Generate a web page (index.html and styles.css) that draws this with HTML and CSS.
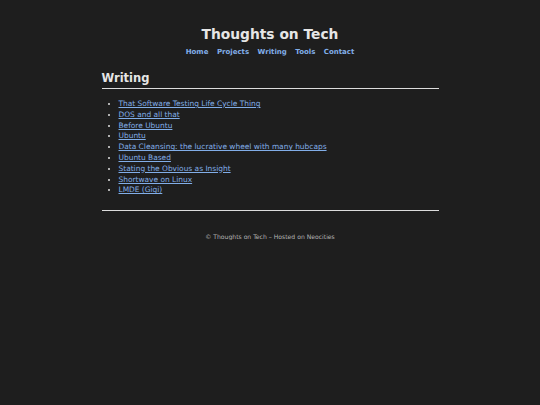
FILE: index.html
```
<!DOCTYPE html>
<html>
<head>
<meta charset="utf-8">
<link rel="stylesheet" href="styles.css">
</head>
<body>
<header class="site-header">
  <h1 class="site-title">Thoughts on Tech</h1>
  <nav class="site-nav">
    <a href="#">Home</a>
    <a href="#">Projects</a>
    <a href="#">Writing</a>
    <a href="#">Tools</a>
    <a href="#">Contact</a>
  </nav>
</header>
<main class="content">
  <h2 class="section-title">Writing</h2>
  <ul class="post-list">
    <li><a href="#">That Software Testing Life Cycle Thing</a></li>
    <li><a href="#">DOS and all that</a></li>
    <li><a href="#">Before Ubuntu</a></li>
    <li><a href="#">Ubuntu</a></li>
    <li><a href="#">Data Cleansing: the lucrative wheel with many hubcaps</a></li>
    <li><a href="#">Ubuntu Based</a></li>
    <li><a href="#">Stating the Obvious as Insight</a></li>
    <li><a href="#">Shortwave on Linux</a></li>
    <li><a href="#">LMDE (Gigi)</a></li>
  </ul>
  <hr class="rule">
  <footer class="site-footer">© Thoughts on Tech – Hosted on Neocities</footer>
</main>
</body>
</html>
```
FILE: styles.css
```
html, body {
  margin: 0;
  padding: 0;
  background: #1e1e1e;
  color: #e0e0e0;
  font-family: "DejaVu Sans", Verdana, sans-serif;
}
body {
  padding-top: 25px;
}
.site-header {
  text-align: center;
}
.site-title {
  margin: 0;
  font-size: 13.8px;
  line-height: 18px;
  color: #e6e6e6;
}
.site-nav {
  margin-top: 5px;
  display: flex;
  justify-content: center;
  gap: 8.5px;
  font-size: 7px;
  line-height: 9px;
  font-weight: bold;
}
.site-nav a {
  color: #82aee8;
  text-decoration: none;
}
.content {
  width: 337px;
  margin: 0 auto;
}
.section-title {
  margin: 14px 0 0;
  font-size: 11.5px;
  line-height: 15px;
  color: #e6e6e6;
  padding-bottom: 2px;
  border-bottom: 1.5px solid #dcdcdc;
}
.post-list {
  margin: 10px 0 0;
  padding-left: 17px;
  font-size: 7.45px;
  line-height: 10.8px;
}
.post-list a {
  color: #82aee8;
}
.rule {
  margin: 14px 0 0;
  border: 0;
  border-top: 1.5px solid #dcdcdc;
}
.site-footer {
  margin-top: 22px;
  text-align: center;
  font-size: 6.1px;
  color: #b4b4b4;
}
```
